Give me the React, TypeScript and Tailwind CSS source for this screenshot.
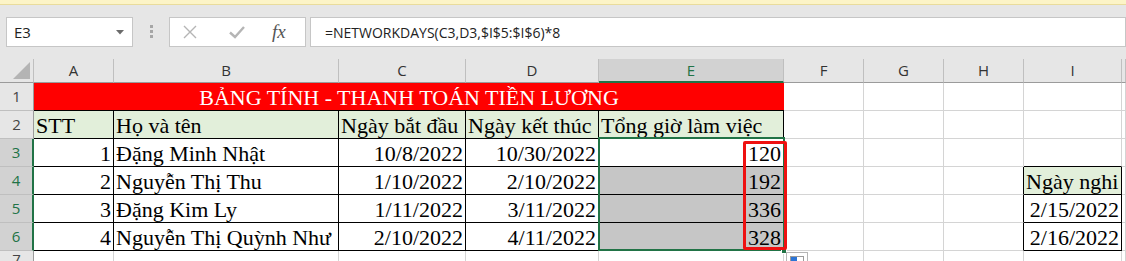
import React from "react";

const serif = "font-['Liberation_Serif','Times_New_Roman',serif]";

function RowHead({ n, active }: { n: string; active?: boolean }) {
  return (
    <div
      className={
        active
          ? "flex items-center justify-center bg-[#d2d2d2] border-b border-b-[#bfbfbf] border-r-2 border-r-[#217346] text-[#217346] text-[15px] font-['Open_Sans',sans-serif]"
          : "flex items-center justify-center bg-[#e6e6e6] border-b border-b-[#bfbfbf] border-r border-r-[#9b9b9b] text-[#444] text-[15px] font-['Open_Sans',sans-serif]"
      }
    >
      {n}
    </div>
  );
}

function ColHead({ l, active }: { l: string; active?: boolean }) {
  return (
    <div
      className={
        active
          ? "flex items-center justify-center bg-[#d2d2d2] border-r border-r-[#bfbfbf] border-b-2 border-b-[#217346] text-[#217346] text-[15px] font-['Open_Sans',sans-serif]"
          : "flex items-center justify-center bg-[#e6e6e6] border-r border-r-[#bfbfbf] border-b border-b-[#9b9b9b] text-[#333] text-[15px] font-['Open_Sans',sans-serif]"
      }
    >
      {l}
    </div>
  );
}

function Grid() {
  return <div className="bg-white border-r border-b border-[#d4d4d4]" />;
}

function T({
  children,
  right,
  cls,
}: {
  children?: React.ReactNode;
  right?: boolean;
  cls?: string;
}) {
  return (
    <div
      className={
        "flex items-end pb-[1px] px-[2px] border-r border-b border-black text-[22px] leading-none text-black whitespace-nowrap overflow-hidden " +
        serif +
        " " +
        (right ? "justify-end " : "justify-start ") +
        (cls ?? "bg-white")
      }
    >
      {children}
    </div>
  );
}

export default function App() {
  const rows = [
    ["1", "Đặng Minh Nhật", "10/8/2022", "10/30/2022", "120"],
    ["2", "Nguyễn Thị Thu", "1/10/2022", "2/10/2022", "192"],
    ["3", "Đặng Kim Ly", "1/11/2022", "3/11/2022", "336"],
    ["4", "Nguyễn Thị Quỳnh Như", "2/10/2022", "4/11/2022", "328"],
  ];
  const iCol: Record<number, { t: string; kind: "h" | "d" } | null> = {
    0: null,
    1: { t: "Ngày nghi", kind: "h" },
    2: { t: "2/15/2022", kind: "d" },
    3: { t: "2/16/2022", kind: "d" },
  };

  return (
    <div className="w-[1126px] h-[261px] overflow-hidden bg-[#e6e6e6] relative">
      {/* Top strip */}
      <div className="h-[4px] bg-[#fcf4c7]" />
      <div className="h-[1px] bg-[#e9dc9c]" />
      {/* Formula bar */}
      <div className="h-[54px] flex items-start pt-[12px] font-['Open_Sans',sans-serif]">
        <div className="ml-[6px] w-[127px] h-[30px] bg-white border border-[#c6c6c6] flex items-center justify-between pl-[7px] pr-[8px]">
          <span className="text-[15px] text-[#222]">E3</span>
          <svg width="8" height="5" viewBox="0 0 8 5">
            <polygon points="0,0 8,0 4,4.5" fill="#6b6b6b" />
          </svg>
        </div>
        <div className="ml-[17px] mt-[8px] flex flex-col gap-[2px]">
          <div className="w-[3px] h-[3px] bg-[#a6a6a6]" />
          <div className="w-[3px] h-[3px] bg-[#a6a6a6]" />
          <div className="w-[3px] h-[3px] bg-[#a6a6a6]" />
        </div>
        <div className="ml-[16px] w-[137px] h-[30px] bg-white border border-[#c6c6c6] flex items-center">
          <svg className="ml-[12px]" width="16" height="16" viewBox="0 0 16 16">
            <path d="M2 2 L14 14 M14 2 L2 14" stroke="#b5b5b5" strokeWidth="1.4" fill="none" />
          </svg>
          <svg className="ml-[30px]" width="18" height="16" viewBox="0 0 18 16">
            <path d="M2 8.5 L7 13 L16 3" stroke="#b5b5b5" strokeWidth="2.4" fill="none" />
          </svg>
          <span className={"ml-[26px] text-[19px] italic text-[#555] " + serif}>
            fx
          </span>
        </div>
        <div className="ml-[4px] flex-1 h-[30px] bg-white border border-[#c6c6c6] flex items-center pl-[14px]">
          <span className="text-[14px] text-[#222]">=NETWORKDAYS(C3,D3,$I$5:$I$6)*8</span>
        </div>
      </div>

      {/* Sheet */}
      <div className="relative grid grid-cols-[34px_80px_225px_127px_133px_185px_80px_80px_80px_98px_1fr] grid-rows-[24px_28px_28px_28px_28px_28px_28px_11px]">
        {/* header row */}
        <div className="bg-[#e6e6e6] border-r border-r-[#bfbfbf] border-b border-b-[#9b9b9b] flex items-end justify-end pr-[3px] pb-[3px]">
          <svg width="17" height="17" viewBox="0 0 17 17">
            <polygon points="17,0 17,17 0,17" fill="#b4b4b4" />
          </svg>
        </div>
        <ColHead l="A" />
        <ColHead l="B" />
        <ColHead l="C" />
        <ColHead l="D" />
        <ColHead l="E" active />
        <ColHead l="F" />
        <ColHead l="G" />
        <ColHead l="H" />
        <ColHead l="I" />
        <ColHead l="" />

        {/* row 1 */}
        <RowHead n="1" />
        <div
          className={
            "col-span-5 bg-[#ff0000] border-b border-black flex items-end justify-center pb-[1px] text-[22px] leading-none text-white whitespace-nowrap " +
            serif
          }
        >
          BẢNG TÍNH - THANH TOÁN TIỀN LƯƠNG
        </div>
        <Grid />
        <Grid />
        <Grid />
        <Grid />
        <Grid />

        {/* row 2 */}
        <RowHead n="2" />
        <T cls="bg-[#e2efda]">STT</T>
        <T cls="bg-[#e2efda]">Họ và tên</T>
        <T cls="bg-[#e2efda]">Ngày bắt đầu</T>
        <T cls="bg-[#e2efda]">Ngày kết thúc</T>
        <T cls="bg-[#e2efda]">Tổng giờ làm việc</T>
        <Grid />
        <Grid />
        <Grid />
        <Grid />
        <Grid />

        {rows.map((r, i) => {
          const ic = iCol[i];
          return (
            <React.Fragment key={i}>
              <RowHead n={String(i + 3)} active />
              <T right>{r[0]}</T>
              <T>{r[1]}</T>
              <T right>{r[2]}</T>
              <T right>{r[3]}</T>
              <T right cls={i === 0 ? "bg-white" : "bg-[#c6c6c6]"}>
                {r[4]}
              </T>
              <Grid />
              <Grid />
              {ic ? (
                <div className="bg-white border-r border-r-black border-b border-b-[#d4d4d4]" />
              ) : (
                <Grid />
              )}
              {ic ? (
                ic.kind === "h" ? (
                  <T cls="bg-[#e2efda]">{ic.t}</T>
                ) : (
                  <T right>{ic.t}</T>
                )
              ) : (
                <div className="bg-white border-r border-r-[#d4d4d4] border-b border-b-black" />
              )}
              <Grid />
            </React.Fragment>
          );
        })}

        {/* row 7 */}
        <div className="bg-[#e6e6e6] border-r border-r-[#9b9b9b] flex items-start justify-center text-[15px] text-[#444] leading-none pt-[1px] font-['Open_Sans',sans-serif]">
          7
        </div>
        {Array.from({ length: 10 }).map((_, k) => (
          <div key={k} className="bg-white border-r border-[#d4d4d4]" />
        ))}

        {/* selection border */}
        <div className="absolute left-[598px] top-[78px] w-[187px] h-[114px] border-2 border-[#217346] pointer-events-none" />
        {/* fill handle */}
        <div className="absolute left-[781px] top-[189px] w-[6px] h-[6px] bg-[#217346] border border-white pointer-events-none" />
        {/* red highlight */}
        <div className="absolute left-[743px] top-[82px] w-[44px] h-[109px] border-[3px] border-[#ee1111] rounded-[2px] pointer-events-none" />
        {/* paste options */}
        <div className="absolute left-[786px] top-[193px] w-[22px] h-[20px] bg-white border border-[#b5b5b5] flex items-start justify-center pt-[3px] pointer-events-none">
          <div className="w-[14px] h-[12px] border border-[#9a9a9a] bg-white flex">
            <div className="w-[6px] h-[8px] bg-[#2b74d6]" />
          </div>
        </div>
      </div>
    </div>
  );
}
